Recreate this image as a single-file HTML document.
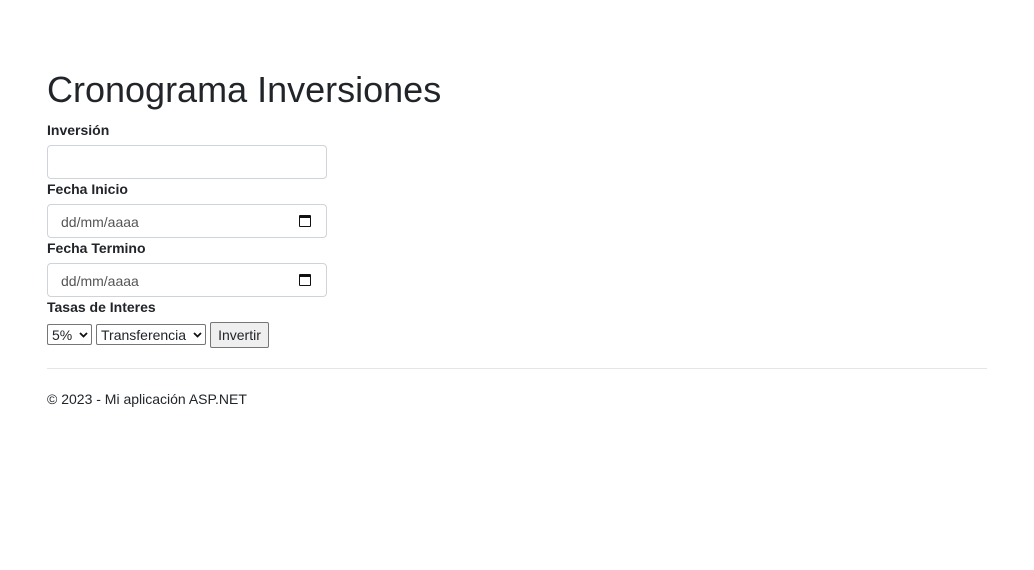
<!DOCTYPE html>
<html><head><meta charset="utf-8"><style>
body{margin:0;font-family:"Liberation Sans",sans-serif;color:#212529;background:#fff;font-size:14px;}
.c{position:absolute;left:47px;}
h1{position:absolute;left:47px;top:70px;margin:0;font-size:36px;font-weight:400;color:#212529;line-height:40px;}
.lbl{position:absolute;left:47px;font-weight:700;font-size:14px;}
.in{position:absolute;left:47px;width:280px;height:34px;border:1px solid #ced4da;border-radius:4px;box-sizing:border-box;background:#fff;}
.ph{position:absolute;left:13px;top:9px;color:#555;font-size:14px;}
.cal{position:absolute;right:15px;top:10px;width:12px;height:12px;border:1.5px solid #111;border-top-width:3px;box-sizing:border-box;border-radius:1px;}
.sel{position:absolute;top:324px;height:21px;border:1px solid #767676;border-radius:2px;box-sizing:border-box;font-size:14px;line-height:20px;padding-left:4px;background:#fff;}
.sel svg{position:absolute;right:3px;top:7px;}
.btn{position:absolute;left:210px;top:322px;width:59px;height:26px;border:1px solid #767676;border-radius:2px;box-sizing:border-box;background:#efefef;font-size:14px;text-align:center;line-height:24px;}
hr{position:absolute;left:47px;top:368px;width:940px;margin:0;border:0;border-top:1px solid #e5e5e5;}
</style></head><body>
<h1>Cronograma Inversiones</h1>
<div class="lbl" style="top:122px">Inversión</div>
<div class="in" style="top:145px"></div>
<div class="lbl" style="top:181px">Fecha Inicio</div>
<div class="in" style="top:204px"><span class="ph">dd/mm/aaaa</span><span class="cal"></span></div>
<div class="lbl" style="top:240px">Fecha Termino</div>
<div class="in" style="top:263px"><span class="ph">dd/mm/aaaa</span><span class="cal"></span></div>
<div class="lbl" style="top:299px">Tasas de Interes</div>
<div class="sel" style="left:47px;width:45px">5%<svg width="9" height="6" viewBox="0 0 9 6"><path d="M1 1l3.5 3.5L8 1" stroke="#111" stroke-width="1.8" fill="none"/></svg></div>
<div class="sel" style="left:96px;width:110px">Transferencia<svg width="9" height="6" viewBox="0 0 9 6"><path d="M1 1l3.5 3.5L8 1" stroke="#111" stroke-width="1.8" fill="none"/></svg></div>
<div class="btn">Invertir</div>
<hr>
<div class="c" style="top:391px">© 2023 - Mi aplicación ASP.NET</div>
</body></html>
